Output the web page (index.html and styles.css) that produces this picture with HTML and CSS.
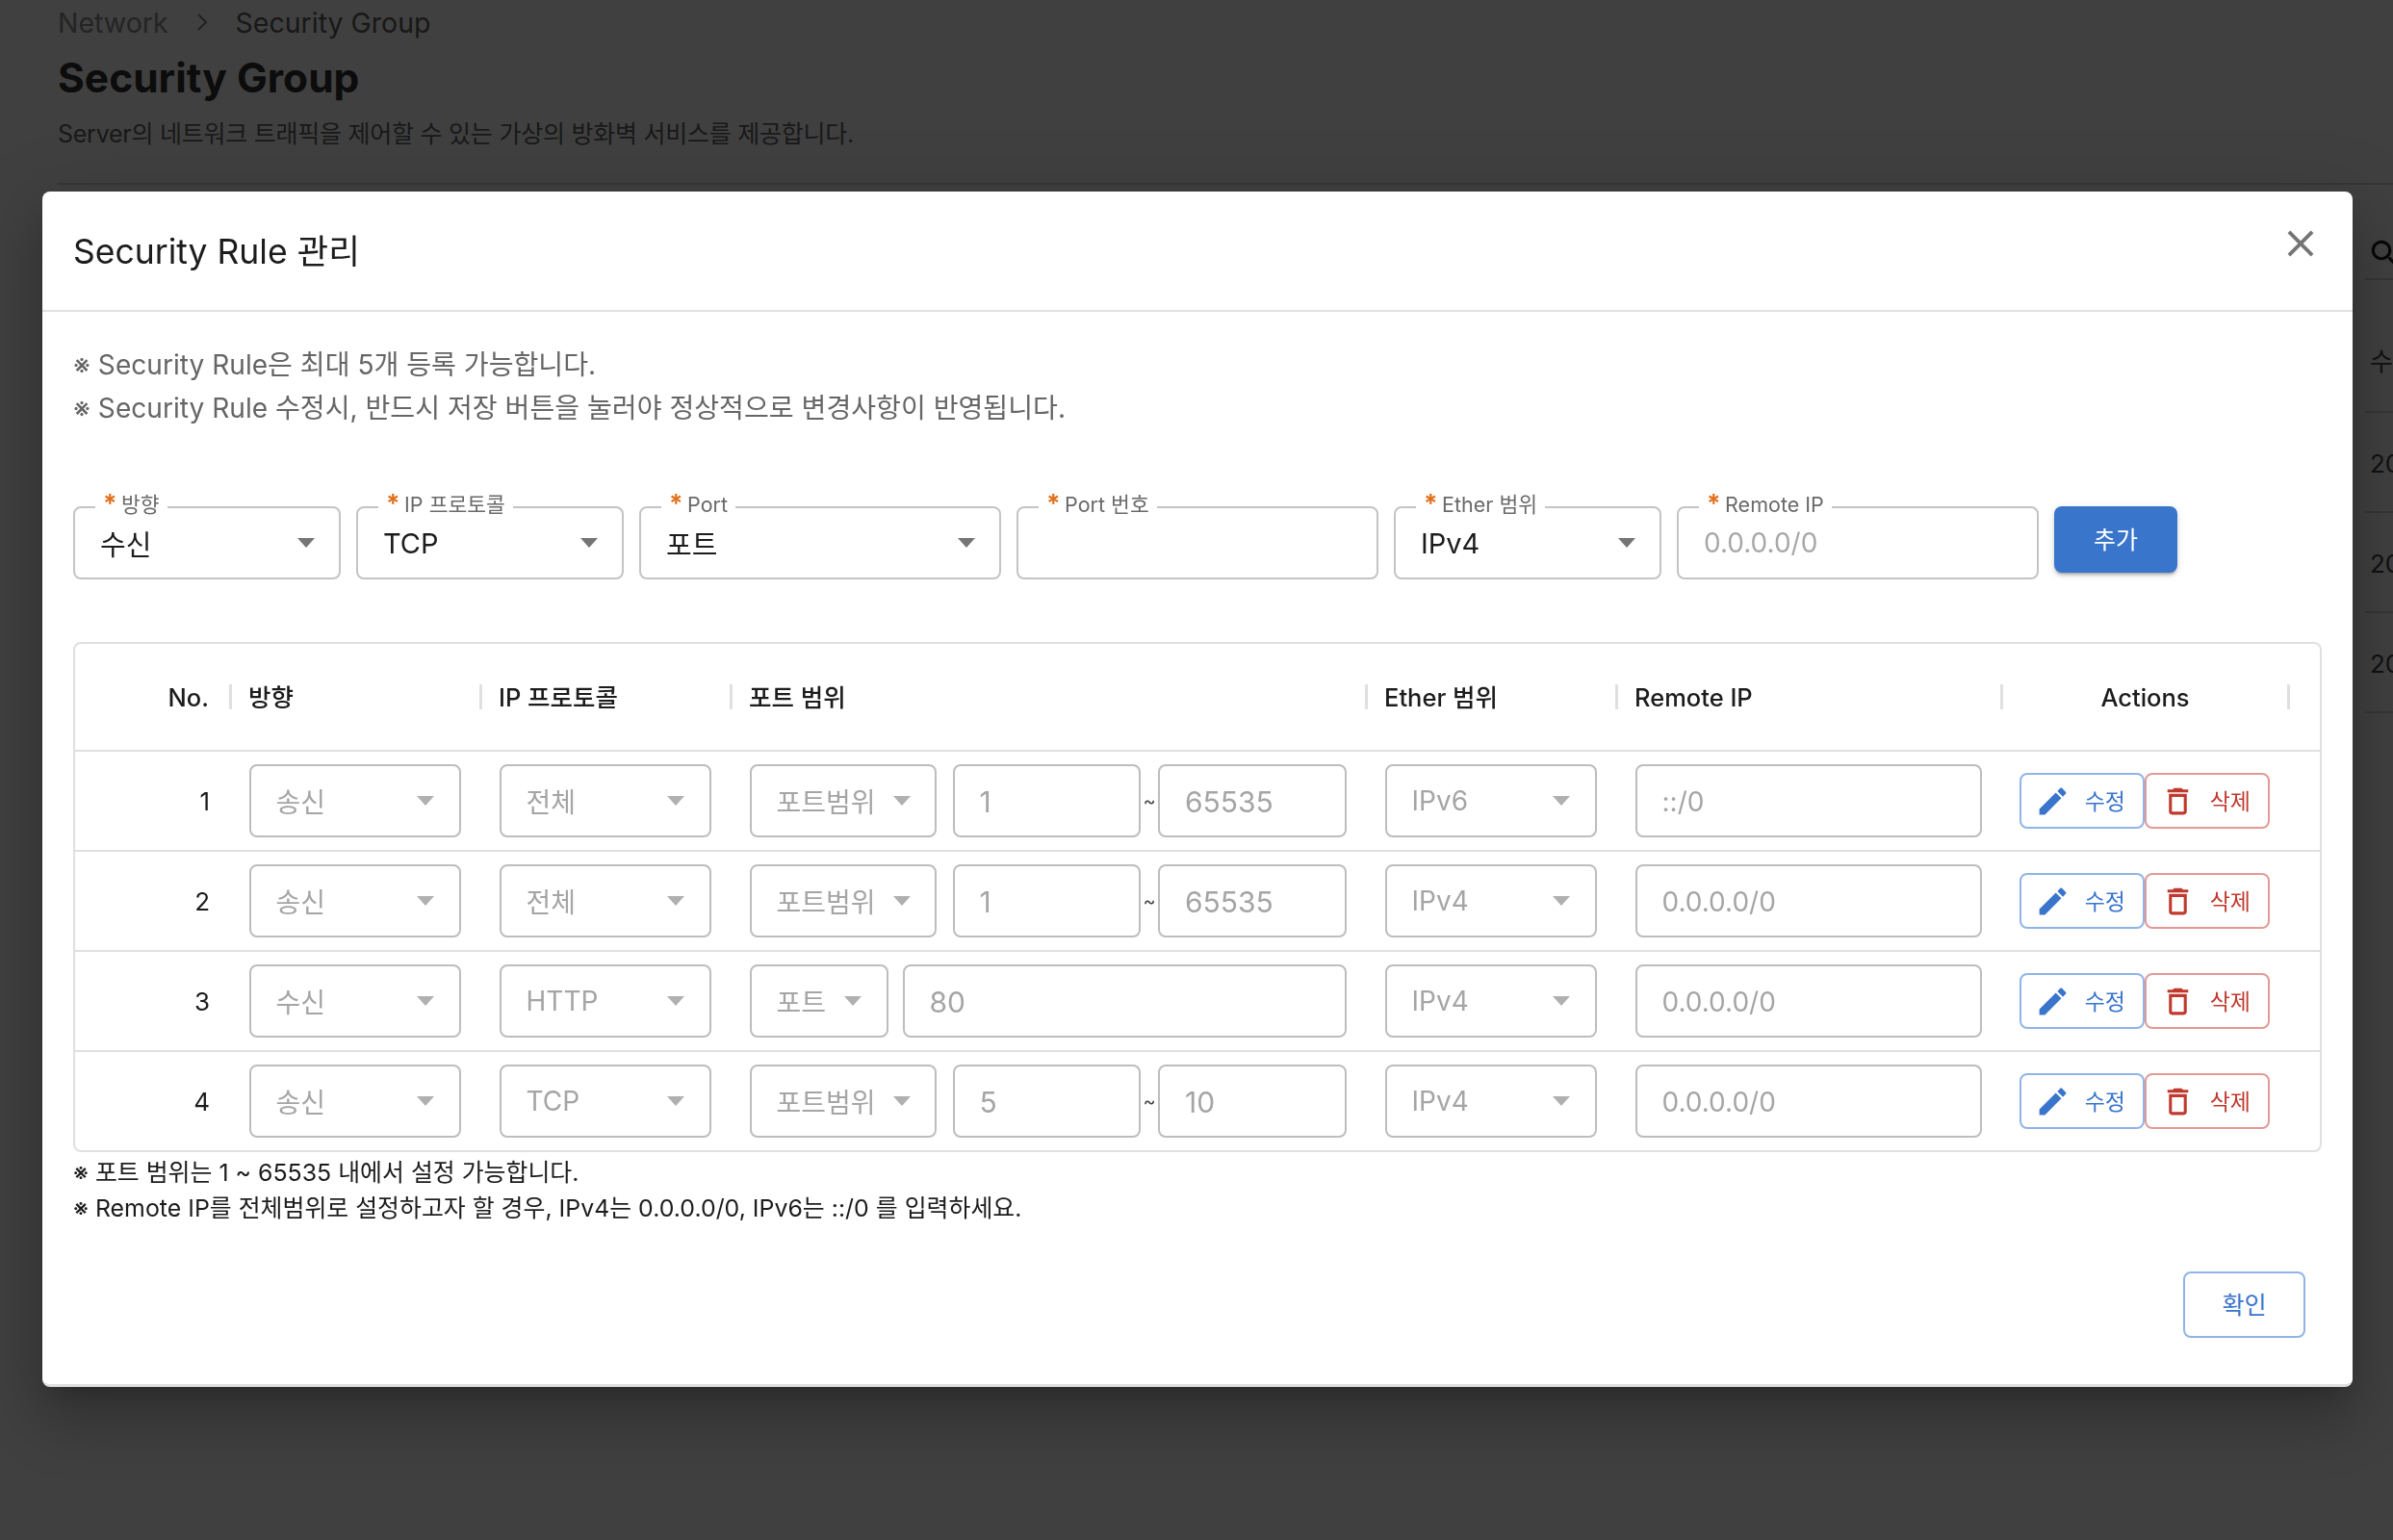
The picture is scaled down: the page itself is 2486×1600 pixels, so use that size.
FILE: index.html
```html
<!DOCTYPE html>
<html lang="ko">

<head>
    <meta charset="UTF-8">
    <meta name="viewport" content="width=device-width, initial-scale=1.0">
    <title>Security Group</title>
    <link rel="stylesheet" href="styles.css">
</head>

<body>
    <div class="page">
        <div class="crumbs">
            <span class="crumb-parent">Network</span>
            <svg class="crumb-sep" viewBox="0 0 12 20"><path d="M2 2l8 8-8 8" fill="none" stroke="currentColor" stroke-width="2"/></svg>
            <span class="crumb-current">Security Group</span>
        </div>
        <h1 class="page-title">Security Group</h1>
        <p class="page-desc">Server의 네트워크 트래픽을 제어할 수 있는 가상의 방화벽 서비스를 제공합니다.</p>
        <hr class="page-line">
        <div class="bg-list">
            <div class="bg-search">
                <svg class="bg-search-icon" viewBox="0 0 24 24"><path d="M15.5 14h-.79l-.28-.27C15.41 12.59 16 11.11 16 9.5 16 5.91 13.09 3 9.5 3S3 5.91 3 9.5 5.91 16 9.5 16c1.61 0 3.09-.59 4.23-1.57l.27.28v.79l5 4.99L20.49 19l-4.99-5zm-6 0C7.01 14 5 11.99 5 9.5S7.01 5 9.5 5 14 7.01 14 9.5 11.99 14 9.5 14z"/></svg>
            </div>
            <div class="bg-row bg-row-head">수정일</div>
            <div class="bg-row">2023-05-10</div>
            <div class="bg-row">2023-05-10</div>
            <div class="bg-row">2023-05-10</div>
        </div>
    </div>

    <div class="overlay"></div>

    <div class="modal">
        <div class="modal-head">
            <h2 class="modal-title">Security Rule 관리</h2>
            <svg class="modal-close" viewBox="0 0 24 24"><path d="M19 6.41 17.59 5 12 10.59 6.41 5 5 6.41 10.59 12 5 17.59 6.41 19 12 13.41 17.59 19 19 17.59 13.41 12z"/></svg>
        </div>

        <div class="modal-body">
            <div class="notice">
                <p>※ Security Rule은 최대 5개 등록 가능합니다.</p>
                <p>※ Security Rule 수정시, 반드시 저장 버튼을 눌러야 정상적으로 변경사항이 반영됩니다.</p>
            </div>

            <div class="add-form">
                <div class="field w-sm">
                    <label class="field-label"><span class="req">*</span> 방향</label>
                    <span class="field-value">수신</span><i class="arrow"></i>
                </div>
                <div class="field w-sm">
                    <label class="field-label"><span class="req">*</span> IP 프로토콜</label>
                    <span class="field-value">TCP</span><i class="arrow"></i>
                </div>
                <div class="field w-lg">
                    <label class="field-label"><span class="req">*</span> Port</label>
                    <span class="field-value">포트</span><i class="arrow"></i>
                </div>
                <div class="field w-lg">
                    <label class="field-label"><span class="req">*</span> Port 번호</label>
                </div>
                <div class="field w-sm">
                    <label class="field-label"><span class="req">*</span> Ether 범위</label>
                    <span class="field-value">IPv4</span><i class="arrow"></i>
                </div>
                <div class="field w-lg">
                    <label class="field-label"><span class="req">*</span> Remote IP</label>
                    <span class="field-value placeholder">0.0.0.0/0</span>
                </div>
                <button class="btn-add">추가</button>
            </div>

            <div class="rule-table">
                <div class="rule-row rule-head">
                    <div class="th th-no">No.</div>
                    <div class="th">방향</div>
                    <div class="th">IP 프로토콜</div>
                    <div class="th">포트 범위</div>
                    <div class="th">Ether 범위</div>
                    <div class="th">Remote IP</div>
                    <div class="th th-actions">Actions</div>
                </div>

                <div class="rule-row">
                    <div class="td td-no">1</div>
                    <div class="td"><div class="box grow"><span>송신</span><i class="arrow"></i></div></div>
                    <div class="td"><div class="box grow"><span>전체</span><i class="arrow"></i></div></div>
                    <div class="td">
                        <div class="box port-range"><span>포트범위</span><i class="arrow"></i></div>
                        <div class="box input grow"><span class="num">1</span></div>
                        <span class="tilde">~</span>
                        <div class="box input grow"><span class="num">65535</span></div>
                    </div>
                    <div class="td"><div class="box grow"><span>IPv6</span><i class="arrow"></i></div></div>
                    <div class="td"><div class="box input grow"><span>::/0</span></div></div>
                    <div class="td td-actions">
                        <button class="btn-line btn-edit"><svg viewBox="0 0 24 24"><path d="M3 17.25V21h3.75L17.81 9.94l-3.75-3.75L3 17.25zM20.71 7.04c.39-.39.39-1.02 0-1.41l-2.34-2.34c-.39-.39-1.02-.39-1.41 0l-1.83 1.83 3.75 3.75 1.83-1.83z"/></svg><span>수정</span></button>
                        <button class="btn-line btn-del"><svg viewBox="0 0 24 24"><path d="M6 19c0 1.1.9 2 2 2h8c1.1 0 2-.9 2-2V7H6v12zM8 9h8v10H8V9zm7.5-5l-1-1h-5l-1 1H5v2h14V4z"/></svg><span>삭제</span></button>
                    </div>
                </div>

                <div class="rule-row">
                    <div class="td td-no">2</div>
                    <div class="td"><div class="box grow"><span>송신</span><i class="arrow"></i></div></div>
                    <div class="td"><div class="box grow"><span>전체</span><i class="arrow"></i></div></div>
                    <div class="td">
                        <div class="box port-range"><span>포트범위</span><i class="arrow"></i></div>
                        <div class="box input grow"><span class="num">1</span></div>
                        <span class="tilde">~</span>
                        <div class="box input grow"><span class="num">65535</span></div>
                    </div>
                    <div class="td"><div class="box grow"><span>IPv4</span><i class="arrow"></i></div></div>
                    <div class="td"><div class="box input grow"><span>0.0.0.0/0</span></div></div>
                    <div class="td td-actions">
                        <button class="btn-line btn-edit"><svg viewBox="0 0 24 24"><path d="M3 17.25V21h3.75L17.81 9.94l-3.75-3.75L3 17.25zM20.71 7.04c.39-.39.39-1.02 0-1.41l-2.34-2.34c-.39-.39-1.02-.39-1.41 0l-1.83 1.83 3.75 3.75 1.83-1.83z"/></svg><span>수정</span></button>
                        <button class="btn-line btn-del"><svg viewBox="0 0 24 24"><path d="M6 19c0 1.1.9 2 2 2h8c1.1 0 2-.9 2-2V7H6v12zM8 9h8v10H8V9zm7.5-5l-1-1h-5l-1 1H5v2h14V4z"/></svg><span>삭제</span></button>
                    </div>
                </div>

                <div class="rule-row">
                    <div class="td td-no">3</div>
                    <div class="td"><div class="box grow"><span>수신</span><i class="arrow"></i></div></div>
                    <div class="td"><div class="box grow"><span>HTTP</span><i class="arrow"></i></div></div>
                    <div class="td">
                        <div class="box port-single"><span>포트</span><i class="arrow"></i></div>
                        <div class="box input grow"><span class="num">80</span></div>
                    </div>
                    <div class="td"><div class="box grow"><span>IPv4</span><i class="arrow"></i></div></div>
                    <div class="td"><div class="box input grow"><span>0.0.0.0/0</span></div></div>
                    <div class="td td-actions">
                        <button class="btn-line btn-edit"><svg viewBox="0 0 24 24"><path d="M3 17.25V21h3.75L17.81 9.94l-3.75-3.75L3 17.25zM20.71 7.04c.39-.39.39-1.02 0-1.41l-2.34-2.34c-.39-.39-1.02-.39-1.41 0l-1.83 1.83 3.75 3.75 1.83-1.83z"/></svg><span>수정</span></button>
                        <button class="btn-line btn-del"><svg viewBox="0 0 24 24"><path d="M6 19c0 1.1.9 2 2 2h8c1.1 0 2-.9 2-2V7H6v12zM8 9h8v10H8V9zm7.5-5l-1-1h-5l-1 1H5v2h14V4z"/></svg><span>삭제</span></button>
                    </div>
                </div>

                <div class="rule-row">
                    <div class="td td-no">4</div>
                    <div class="td"><div class="box grow"><span>송신</span><i class="arrow"></i></div></div>
                    <div class="td"><div class="box grow"><span>TCP</span><i class="arrow"></i></div></div>
                    <div class="td">
                        <div class="box port-range"><span>포트범위</span><i class="arrow"></i></div>
                        <div class="box input grow"><span class="num">5</span></div>
                        <span class="tilde">~</span>
                        <div class="box input grow"><span class="num">10</span></div>
                    </div>
                    <div class="td"><div class="box grow"><span>IPv4</span><i class="arrow"></i></div></div>
                    <div class="td"><div class="box input grow"><span>0.0.0.0/0</span></div></div>
                    <div class="td td-actions">
                        <button class="btn-line btn-edit"><svg viewBox="0 0 24 24"><path d="M3 17.25V21h3.75L17.81 9.94l-3.75-3.75L3 17.25zM20.71 7.04c.39-.39.39-1.02 0-1.41l-2.34-2.34c-.39-.39-1.02-.39-1.41 0l-1.83 1.83 3.75 3.75 1.83-1.83z"/></svg><span>수정</span></button>
                        <button class="btn-line btn-del"><svg viewBox="0 0 24 24"><path d="M6 19c0 1.1.9 2 2 2h8c1.1 0 2-.9 2-2V7H6v12zM8 9h8v10H8V9zm7.5-5l-1-1h-5l-1 1H5v2h14V4z"/></svg><span>삭제</span></button>
                    </div>
                </div>
            </div>

            <div class="foot-notes">
                <p>※ 포트 범위는 1 ~ 65535 내에서 설정 가능합니다.</p>
                <p>※ Remote IP를 전체범위로 설정하고자 할 경우, IPv4는 0.0.0.0/0, IPv6는 ::/0 를 입력하세요.</p>
            </div>
        </div>

        <div class="modal-foot">
            <button class="btn-ok">확인</button>
        </div>
    </div>
</body>

</html>
```

FILE: styles.css
```css
* {
    box-sizing: border-box;
}

html,
body {
    margin: 0;
    height: 1600px;
    overflow: hidden;
}

body {
    background-color: white;
    color: #1c1c1c;
    font-family: Inter, "Noto Sans CJK KR", sans-serif;
}

p {
    margin: 0;
}

/* page behind the dialog */
.page {
    padding-left: 60px;
}

.crumbs {
    display: flex;
    align-items: center;
    height: 46px;
    font-size: 28.5px;
}

.crumb-parent {
    color: #909090;
}

.crumb-sep {
    width: 12px;
    height: 20px;
    margin: 0 29px;
    color: #808080;
}

.crumb-current {
    color: #606060;
}

.page-title {
    margin: 10px 0 0;
    font-size: 42.5px;
    font-weight: 700;
    line-height: 50px;
    color: #333;
}

.page-desc {
    margin-top: 15px;
    font-size: 25px;
    letter-spacing: -0.25px;
    line-height: 36px;
    color: #666;
}

.page-line {
    margin: 33px 0 0;
    border: none;
    border-top: 2px solid #d8d8d8;
}

.bg-list {
    margin-left: 2397px;
    overflow: hidden;
    white-space: nowrap;
    font-size: 26px;
    color: #444;
}

.bg-search {
    height: 99px;
    padding-top: 53px;
    border-bottom: 2px solid #d8d8d8;
}

.bg-search-icon {
    display: block;
    width: 38px;
    height: 38px;
    margin-left: 2px;
    fill: #222;
}

.bg-row {
    display: flex;
    align-items: center;
    height: 104px;
    padding: 2px 0 0 5px;
    border-bottom: 2px solid #d8d8d8;
}

.bg-row-head {
    height: 138px;
    padding-top: 28px;
}

.overlay {
    position: fixed;
    inset: 0;
    background-color: rgba(0, 0, 0, 0.75);
}

/* dialog */
.modal {
    position: absolute;
    left: 44px;
    top: 199px;
    width: 2400px;
    height: 1242px;
    background-color: white;
    border-bottom: 3px solid #e0e0e0;
    border-radius: 8px;
    box-shadow: 0 17px 24px -11px rgba(0, 0, 0, 0.2), 0 38px 60px 5px rgba(0, 0, 0, 0.14), 0 14px 73px 13px rgba(0, 0, 0, 0.12);
}

.modal-head {
    display: flex;
    align-items: center;
    justify-content: space-between;
    height: 125px;
    padding: 0 31px 0 32px;
    border-bottom: 2px solid #e0e0e0;
}

.modal-title {
    margin: 0 0 4px;
    font-size: 35.5px;
    font-weight: 400;
    color: #1c1c1c;
}

.modal-close {
    width: 46px;
    height: 46px;
    margin-bottom: 16px;
    fill: #757575;
}

.modal-body {
    padding: 33px 32px 0;
}

.notice {
    font-size: 28.1px;
    line-height: 45px;
    color: #666;
}

/* add form */
.add-form {
    display: flex;
    gap: 16.5px;
    margin-top: 79px;
}

.field {
    position: relative;
    display: flex;
    align-items: center;
    justify-content: space-between;
    height: 76px;
    padding: 0 25px 0 26px;
    border: 2px solid #c4c4c4;
    border-radius: 8px;
    color: #1c1c1c;
}

.w-sm {
    width: 277.5px;
}

.w-lg {
    width: 375.5px;
}

.field-label {
    position: absolute;
    left: 21px;
    top: -17px;
    padding: 0 8px;
    background-color: white;
    font-size: 21.5px;
    line-height: 26px;
    color: #6a6a6a;
    white-space: nowrap;
}

.req {
    margin-right: -1.5px;
    font-size: 26px;
    font-weight: 700;
    line-height: 0;
    color: #e0711c;
}

.field-value {
    font-size: 29px;
}

.placeholder {
    font-size: 28px;
    color: #a8a8a8;
}

.arrow {
    display: block;
    flex: none;
    width: 0;
    height: 0;
    border-left: 9px solid transparent;
    border-right: 9px solid transparent;
    border-top: 10px solid #757575;
}

.btn-add {
    width: 128px;
    height: 69px;
    padding: 0 0 3px;
    background-color: #3a75cc;
    color: white;
    border: none;
    border-radius: 8px;
    font: inherit;
    font-size: 25px;
    box-shadow: 0 3px 2px -2px rgba(0, 0, 0, 0.2), 0 3px 3px rgba(0, 0, 0, 0.14), 0 2px 8px rgba(0, 0, 0, 0.12);
}

/* rule table */
.rule-table {
    margin-top: 65px;
    border: 2px solid #e0e0e0;
    border-radius: 8px;
}

.rule-row {
    display: grid;
    grid-template-columns: 160px 260px 260px 660px 260px 400px 1fr;
    align-items: center;
    height: 104px;
    border-top: 2px solid #e0e0e0;
}

.rule-head {
    height: 110px;
    border-top: none;
}

.th {
    height: 26px;
    padding-left: 17px;
    border-left: 3px solid #e0e0e0;
    font-size: 25.5px;
    font-weight: 500;
    line-height: 28px;
    color: #1c1c1c;
    white-space: nowrap;
}

.th-no {
    padding: 0 21px 0 0;
    border-left: none;
    text-align: right;
}

.th-actions {
    width: 301px;
    padding-left: 0;
    border-right: 3px solid #e0e0e0;
    text-align: center;
}

.td {
    display: flex;
    align-items: center;
    padding: 0 19.5px 0 20.5px;
}

.td-no {
    justify-content: flex-end;
    padding: 0 20px 0 0;
    font-size: 26px;
    color: #1c1c1c;
}

.box {
    display: flex;
    align-items: center;
    justify-content: space-between;
    height: 76px;
    padding: 0 26px 0 26px;
    border: 2px solid #bdbdbd;
    border-radius: 8px;
    font-size: 28px;
    color: #a5a5a5;
    white-space: nowrap;
}

.input span {
    padding-top: 2px;
}

.num {
    font-size: 30px;
}

.box .arrow {
    border-top-color: #b0b0b0;
}

.grow {
    flex: 1;
    min-width: 0;
}

.port-range {
    flex: none;
    width: 194px;
    margin-right: 17px;
    padding-right: 25px;
}

.port-single {
    flex: none;
    width: 144px;
    margin-right: 15px;
}

.tilde {
    width: 18px;
    font-size: 20px;
    text-align: center;
    color: #444;
}

.td-actions {
    padding: 0 0 0 20px;
}

.btn-line {
    display: flex;
    align-items: center;
    justify-content: space-between;
    width: 130px;
    height: 58px;
    padding: 0 18px 0 14px;
    background-color: white;
    border: 2px solid;
    border-radius: 8px;
    font: inherit;
    font-size: 23px;
}

.btn-line span {
    padding-bottom: 3px;
}

.btn-line svg {
    width: 37px;
    height: 37px;
    fill: currentColor;
}

.btn-edit {
    color: #3a75cc;
    border-color: #90b4e8;
}

.btn-del {
    color: #c0392f;
    border-color: #e39a97;
}

.foot-notes {
    margin-top: 3px;
    font-size: 24.9px;
    line-height: 37px;
    color: #1c1c1c;
}

.modal-foot {
    position: absolute;
    right: 49px;
    bottom: 48px;
}

.btn-ok {
    display: block;
    width: 127px;
    height: 69px;
    padding: 0 0 3px;
    background-color: white;
    border: 2px solid #90b4e8;
    border-radius: 8px;
    font: inherit;
    font-size: 25px;
    color: #3a75cc;
}
```
